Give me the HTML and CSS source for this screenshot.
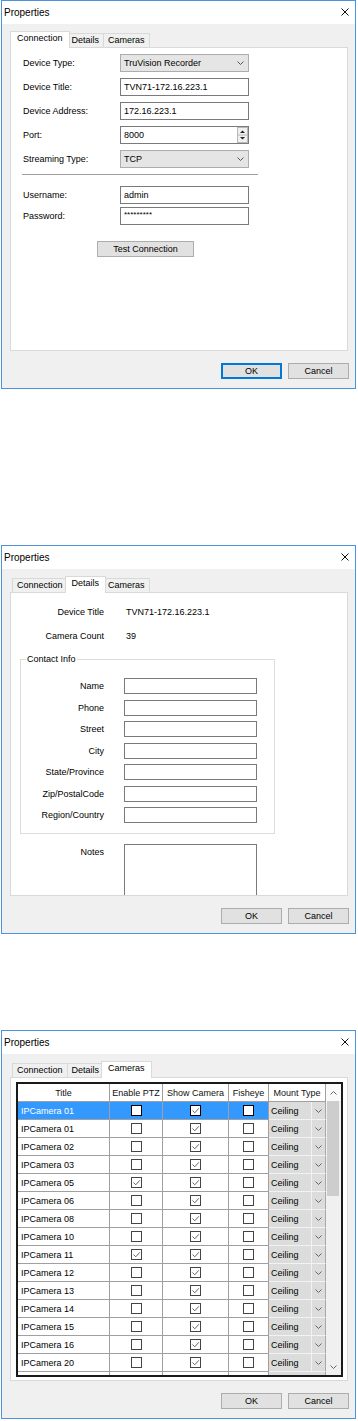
FILE: index.html
```html
<!DOCTYPE html>
<html>
<head>
    <title>Properties</title>
    <link rel="stylesheet" href="styles.css">
</head>
<body>
    <!-- Connection tab -->
    <div class="dialog" id="connection-dialog">
        <div class="title-bar">
            <span class="title-text">Properties</span>
            <svg class="close-icon" width="8" height="8" viewBox="0 0 8 8"><path d="M0.5 0.5L7.5 7.5M7.5 0.5L0.5 7.5" stroke="#111" stroke-width="1" fill="none"/></svg>
        </div>
        <div class="dialog-body">
            <div class="tab-strip">
                <div class="tab active">Connection</div>
                <div class="tab">Details</div>
                <div class="tab">Cameras</div>
            </div>
            <div class="tab-panel connection-panel">
                <div class="form-row">
                    <span class="form-label">Device Type:</span>
                    <div class="combo">
                        <span>TruVision Recorder</span>
                        <svg class="chevron" width="7" height="4" viewBox="0 0 7 4"><path d="M0.5 0.5L3.5 3.5L6.5 0.5" fill="none" stroke="#555"/></svg>
                    </div>
                </div>
                <div class="form-row">
                    <span class="form-label">Device Title:</span>
                    <div class="text-box">TVN71-172.16.223.1</div>
                </div>
                <div class="form-row spaced">
                    <span class="form-label">Device Address:</span>
                    <div class="text-box">172.16.223.1</div>
                </div>
                <div class="form-row">
                    <span class="form-label">Port:</span>
                    <div class="text-box">
                        <span>8000</span>
                        <svg class="spinner" width="11" height="16" viewBox="0 0 11 16">
                            <rect x="0.5" y="0.5" width="10" height="15" fill="#f0f0f0" stroke="#b9b9b9"/>
                            <line x1="0.5" y1="8" x2="10.5" y2="8" stroke="#b9b9b9"/>
                            <path d="M3 6L5.5 3.5L8 6Z" fill="#222"/>
                            <path d="M3 10L5.5 12.5L8 10Z" fill="#222"/>
                        </svg>
                    </div>
                </div>
                <div class="form-row">
                    <span class="form-label">Streaming Type:</span>
                    <div class="combo">
                        <span>TCP</span>
                        <svg class="chevron" width="7" height="4" viewBox="0 0 7 4"><path d="M0.5 0.5L3.5 3.5L6.5 0.5" fill="none" stroke="#555"/></svg>
                    </div>
                </div>
                <div class="separator"></div>
                <div class="form-row tight">
                    <span class="form-label">Username:</span>
                    <div class="text-box">admin</div>
                </div>
                <div class="form-row">
                    <span class="form-label">Password:</span>
                    <div class="text-box password">*********</div>
                </div>
                <button class="btn test-button">Test Connection</button>
            </div>
            <div class="dialog-buttons">
                <button class="btn btn-default">OK</button>
                <button class="btn">Cancel</button>
            </div>
        </div>
    </div>

    <!-- Details tab -->
    <div class="dialog" id="details-dialog">
        <div class="title-bar">
            <span class="title-text">Properties</span>
            <svg class="close-icon" width="8" height="8" viewBox="0 0 8 8"><path d="M0.5 0.5L7.5 7.5M7.5 0.5L0.5 7.5" stroke="#111" stroke-width="1" fill="none"/></svg>
        </div>
        <div class="dialog-body">
            <div class="tab-strip">
                <div class="tab">Connection</div>
                <div class="tab active">Details</div>
                <div class="tab">Cameras</div>
            </div>
            <div class="tab-panel details-panel">
                <div class="info-row">
                    <span class="info-label">Device Title</span>
                    <span class="info-value">TVN71-172.16.223.1</span>
                </div>
                <div class="info-row">
                    <span class="info-label">Camera Count</span>
                    <span class="info-value">39</span>
                </div>
                <div class="group-box">
                    <span class="group-title">Contact Info</span>
                    <div class="group-rows">
                        <div class="group-row"><span class="group-label">Name</span><div class="group-input"></div></div>
                        <div class="group-row"><span class="group-label">Phone</span><div class="group-input"></div></div>
                        <div class="group-row"><span class="group-label">Street</span><div class="group-input"></div></div>
                        <div class="group-row"><span class="group-label">City</span><div class="group-input"></div></div>
                        <div class="group-row"><span class="group-label">State/Province</span><div class="group-input"></div></div>
                        <div class="group-row"><span class="group-label">Zip/PostalCode</span><div class="group-input"></div></div>
                        <div class="group-row"><span class="group-label">Region/Country</span><div class="group-input"></div></div>
                    </div>
                </div>
                <div class="notes-row">
                    <span class="notes-label">Notes</span>
                    <div class="notes-box"></div>
                </div>
            </div>
            <div class="dialog-buttons">
                <button class="btn">OK</button>
                <button class="btn">Cancel</button>
            </div>
        </div>
    </div>

    <!-- Cameras tab -->
    <div class="dialog" id="cameras-dialog">
        <div class="title-bar">
            <span class="title-text">Properties</span>
            <svg class="close-icon" width="8" height="8" viewBox="0 0 8 8"><path d="M0.5 0.5L7.5 7.5M7.5 0.5L0.5 7.5" stroke="#111" stroke-width="1" fill="none"/></svg>
        </div>
        <div class="dialog-body">
            <div class="tab-strip">
                <div class="tab">Connection</div>
                <div class="tab">Details</div>
                <div class="tab active">Cameras</div>
            </div>
            <div class="tab-panel cameras-panel">
                <div class="camera-grid">
                    <div class="grid-table">
                        <div class="cell head">Title</div>
                        <div class="cell head">Enable PTZ</div>
                        <div class="cell head">Show Camera</div>
                        <div class="cell head">Fisheye</div>
                        <div class="cell head mount-head">Mount Type</div>

                        <div class="grid-row selected">
                            <div class="cell name-cell">IPCamera 01</div>
                            <div class="cell"><span class="check"></span></div>
                            <div class="cell"><span class="check"><svg viewBox="0 0 9 9"><path d="M1.5 4.5L3.8 6.8L7.8 2.3"/></svg></span></div>
                            <div class="cell"><span class="check"></span></div>
                            <div class="cell mount-cell"><span class="mount-text">Ceiling</span><span class="mount-arrow"><svg width="7" height="4" viewBox="0 0 7 4"><path d="M0.5 0.5L3.5 3.5L6.5 0.5"/></svg></span></div>
                        </div>
                        <div class="grid-row">
                            <div class="cell name-cell">IPCamera 01</div>
                            <div class="cell"><span class="check"></span></div>
                            <div class="cell"><span class="check"><svg viewBox="0 0 9 9"><path d="M1.5 4.5L3.8 6.8L7.8 2.3"/></svg></span></div>
                            <div class="cell"><span class="check"></span></div>
                            <div class="cell mount-cell"><span class="mount-text">Ceiling</span><span class="mount-arrow"><svg width="7" height="4" viewBox="0 0 7 4"><path d="M0.5 0.5L3.5 3.5L6.5 0.5"/></svg></span></div>
                        </div>
                        <div class="grid-row">
                            <div class="cell name-cell">IPCamera 02</div>
                            <div class="cell"><span class="check"></span></div>
                            <div class="cell"><span class="check"><svg viewBox="0 0 9 9"><path d="M1.5 4.5L3.8 6.8L7.8 2.3"/></svg></span></div>
                            <div class="cell"><span class="check"></span></div>
                            <div class="cell mount-cell"><span class="mount-text">Ceiling</span><span class="mount-arrow"><svg width="7" height="4" viewBox="0 0 7 4"><path d="M0.5 0.5L3.5 3.5L6.5 0.5"/></svg></span></div>
                        </div>
                        <div class="grid-row">
                            <div class="cell name-cell">IPCamera 03</div>
                            <div class="cell"><span class="check"></span></div>
                            <div class="cell"><span class="check"><svg viewBox="0 0 9 9"><path d="M1.5 4.5L3.8 6.8L7.8 2.3"/></svg></span></div>
                            <div class="cell"><span class="check"></span></div>
                            <div class="cell mount-cell"><span class="mount-text">Ceiling</span><span class="mount-arrow"><svg width="7" height="4" viewBox="0 0 7 4"><path d="M0.5 0.5L3.5 3.5L6.5 0.5"/></svg></span></div>
                        </div>
                        <div class="grid-row">
                            <div class="cell name-cell">IPCamera 05</div>
                            <div class="cell"><span class="check"><svg viewBox="0 0 9 9"><path d="M1.5 4.5L3.8 6.8L7.8 2.3"/></svg></span></div>
                            <div class="cell"><span class="check"><svg viewBox="0 0 9 9"><path d="M1.5 4.5L3.8 6.8L7.8 2.3"/></svg></span></div>
                            <div class="cell"><span class="check"></span></div>
                            <div class="cell mount-cell"><span class="mount-text">Ceiling</span><span class="mount-arrow"><svg width="7" height="4" viewBox="0 0 7 4"><path d="M0.5 0.5L3.5 3.5L6.5 0.5"/></svg></span></div>
                        </div>
                        <div class="grid-row">
                            <div class="cell name-cell">IPCamera 06</div>
                            <div class="cell"><span class="check"></span></div>
                            <div class="cell"><span class="check"><svg viewBox="0 0 9 9"><path d="M1.5 4.5L3.8 6.8L7.8 2.3"/></svg></span></div>
                            <div class="cell"><span class="check"></span></div>
                            <div class="cell mount-cell"><span class="mount-text">Ceiling</span><span class="mount-arrow"><svg width="7" height="4" viewBox="0 0 7 4"><path d="M0.5 0.5L3.5 3.5L6.5 0.5"/></svg></span></div>
                        </div>
                        <div class="grid-row">
                            <div class="cell name-cell">IPCamera 08</div>
                            <div class="cell"><span class="check"></span></div>
                            <div class="cell"><span class="check"><svg viewBox="0 0 9 9"><path d="M1.5 4.5L3.8 6.8L7.8 2.3"/></svg></span></div>
                            <div class="cell"><span class="check"></span></div>
                            <div class="cell mount-cell"><span class="mount-text">Ceiling</span><span class="mount-arrow"><svg width="7" height="4" viewBox="0 0 7 4"><path d="M0.5 0.5L3.5 3.5L6.5 0.5"/></svg></span></div>
                        </div>
                        <div class="grid-row">
                            <div class="cell name-cell">IPCamera 10</div>
                            <div class="cell"><span class="check"></span></div>
                            <div class="cell"><span class="check"><svg viewBox="0 0 9 9"><path d="M1.5 4.5L3.8 6.8L7.8 2.3"/></svg></span></div>
                            <div class="cell"><span class="check"></span></div>
                            <div class="cell mount-cell"><span class="mount-text">Ceiling</span><span class="mount-arrow"><svg width="7" height="4" viewBox="0 0 7 4"><path d="M0.5 0.5L3.5 3.5L6.5 0.5"/></svg></span></div>
                        </div>
                        <div class="grid-row">
                            <div class="cell name-cell">IPCamera 11</div>
                            <div class="cell"><span class="check"><svg viewBox="0 0 9 9"><path d="M1.5 4.5L3.8 6.8L7.8 2.3"/></svg></span></div>
                            <div class="cell"><span class="check"><svg viewBox="0 0 9 9"><path d="M1.5 4.5L3.8 6.8L7.8 2.3"/></svg></span></div>
                            <div class="cell"><span class="check"></span></div>
                            <div class="cell mount-cell"><span class="mount-text">Ceiling</span><span class="mount-arrow"><svg width="7" height="4" viewBox="0 0 7 4"><path d="M0.5 0.5L3.5 3.5L6.5 0.5"/></svg></span></div>
                        </div>
                        <div class="grid-row">
                            <div class="cell name-cell">IPCamera 12</div>
                            <div class="cell"><span class="check"></span></div>
                            <div class="cell"><span class="check"><svg viewBox="0 0 9 9"><path d="M1.5 4.5L3.8 6.8L7.8 2.3"/></svg></span></div>
                            <div class="cell"><span class="check"></span></div>
                            <div class="cell mount-cell"><span class="mount-text">Ceiling</span><span class="mount-arrow"><svg width="7" height="4" viewBox="0 0 7 4"><path d="M0.5 0.5L3.5 3.5L6.5 0.5"/></svg></span></div>
                        </div>
                        <div class="grid-row">
                            <div class="cell name-cell">IPCamera 13</div>
                            <div class="cell"><span class="check"></span></div>
                            <div class="cell"><span class="check"><svg viewBox="0 0 9 9"><path d="M1.5 4.5L3.8 6.8L7.8 2.3"/></svg></span></div>
                            <div class="cell"><span class="check"></span></div>
                            <div class="cell mount-cell"><span class="mount-text">Ceiling</span><span class="mount-arrow"><svg width="7" height="4" viewBox="0 0 7 4"><path d="M0.5 0.5L3.5 3.5L6.5 0.5"/></svg></span></div>
                        </div>
                        <div class="grid-row">
                            <div class="cell name-cell">IPCamera 14</div>
                            <div class="cell"><span class="check"></span></div>
                            <div class="cell"><span class="check"><svg viewBox="0 0 9 9"><path d="M1.5 4.5L3.8 6.8L7.8 2.3"/></svg></span></div>
                            <div class="cell"><span class="check"></span></div>
                            <div class="cell mount-cell"><span class="mount-text">Ceiling</span><span class="mount-arrow"><svg width="7" height="4" viewBox="0 0 7 4"><path d="M0.5 0.5L3.5 3.5L6.5 0.5"/></svg></span></div>
                        </div>
                        <div class="grid-row">
                            <div class="cell name-cell">IPCamera 15</div>
                            <div class="cell"><span class="check"></span></div>
                            <div class="cell"><span class="check"><svg viewBox="0 0 9 9"><path d="M1.5 4.5L3.8 6.8L7.8 2.3"/></svg></span></div>
                            <div class="cell"><span class="check"></span></div>
                            <div class="cell mount-cell"><span class="mount-text">Ceiling</span><span class="mount-arrow"><svg width="7" height="4" viewBox="0 0 7 4"><path d="M0.5 0.5L3.5 3.5L6.5 0.5"/></svg></span></div>
                        </div>
                        <div class="grid-row">
                            <div class="cell name-cell">IPCamera 16</div>
                            <div class="cell"><span class="check"></span></div>
                            <div class="cell"><span class="check"><svg viewBox="0 0 9 9"><path d="M1.5 4.5L3.8 6.8L7.8 2.3"/></svg></span></div>
                            <div class="cell"><span class="check"></span></div>
                            <div class="cell mount-cell"><span class="mount-text">Ceiling</span><span class="mount-arrow"><svg width="7" height="4" viewBox="0 0 7 4"><path d="M0.5 0.5L3.5 3.5L6.5 0.5"/></svg></span></div>
                        </div>
                        <div class="grid-row">
                            <div class="cell name-cell">IPCamera 20</div>
                            <div class="cell"><span class="check"></span></div>
                            <div class="cell"><span class="check"><svg viewBox="0 0 9 9"><path d="M1.5 4.5L3.8 6.8L7.8 2.3"/></svg></span></div>
                            <div class="cell"><span class="check"></span></div>
                            <div class="cell mount-cell"><span class="mount-text">Ceiling</span><span class="mount-arrow"><svg width="7" height="4" viewBox="0 0 7 4"><path d="M0.5 0.5L3.5 3.5L6.5 0.5"/></svg></span></div>
                        </div>
                        <div class="grid-row">
                            <div class="cell name-cell"></div>
                            <div class="cell"></div>
                            <div class="cell"></div>
                            <div class="cell"></div>
                            <div class="cell mount-cell"></div>
                        </div>
                    </div>
                    <div class="scrollbar">
                        <div class="scroll-btn scroll-up"><svg width="7" height="4" viewBox="0 0 7 4"><path d="M0.5 3.5L3.5 0.5L6.5 3.5"/></svg></div>
                        <div class="scroll-thumb"></div>
                        <div class="scroll-track"></div>
                        <div class="scroll-btn"><svg width="7" height="4" viewBox="0 0 7 4"><path d="M0.5 0.5L3.5 3.5L6.5 0.5"/></svg></div>
                    </div>
                </div>
            </div>
            <div class="dialog-buttons">
                <button class="btn">OK</button>
                <button class="btn">Cancel</button>
            </div>
        </div>
    </div>
</body>
</html>
```

FILE: styles.css
```css
body {
    margin: 0;
    background-color: #fff;
    font-family: "Liberation Sans", Arial, sans-serif;
    font-size: 9px;
    color: #000;
}

/* window frame */
.dialog {
    box-sizing: border-box;
    width: 355px;
    height: 389px;
    margin-left: 1px;
    border: 1px solid #4b93db;
    background-color: #f0f0f0;
    display: flex;
    flex-direction: column;
}

#details-dialog {
    margin-top: 156px;
}

#cameras-dialog {
    margin-top: 96px;
}

.title-bar {
    flex: none;
    height: 23px;
    background-color: #fff;
    display: flex;
    align-items: center;
    justify-content: space-between;
    padding: 0 6px 1px 2px;
    box-sizing: border-box;
}

.title-text {
    font-size: 10px;
}

.dialog-body {
    flex: 1;
    display: flex;
    flex-direction: column;
    padding: 7px 0 0 8px;
}

/* tabs */
.tab-strip {
    flex: none;
    height: 17px;
    margin-bottom: -1px;
    padding-left: 2px;
    display: flex;
    align-items: flex-end;
    position: relative;
    z-index: 1;
}

.tab {
    box-sizing: border-box;
    height: 14px;
    line-height: 12px;
    padding: 0 4px;
    margin: 0 -1px 1px 0;
    border: 1px solid #d9d9d9;
    border-bottom: none;
    background-color: #f0f0f0;
}

.tab.active {
    height: 17px;
    line-height: 13px;
    padding: 0 6px;
    margin: 0 -3px 0 -2px;
    background-color: #fff;
    position: relative;
    z-index: 2;
}

.tab-panel {
    flex: none;
    box-sizing: border-box;
    width: 338px;
    height: 304px;
    border: 1px solid #d9d9d9;
    background-color: #fff;
    overflow: hidden;
}

.dialog-buttons {
    display: flex;
    justify-content: flex-end;
    gap: 6px;
    margin-top: 12px;
    padding-right: 6px;
}

.btn {
    box-sizing: border-box;
    width: 61px;
    height: 16px;
    padding: 0;
    border: 1px solid #adadad;
    background-color: #e1e1e1;
    font-family: "Liberation Sans", Arial, sans-serif;
    font-size: 9px;
    color: #000;
}

.btn-default {
    border-color: #0078d7;
    box-shadow: inset 0 0 0 1px #0078d7;
}

/* connection */
.connection-panel {
    padding: 6px 0 0 12px;
}

.form-row {
    display: flex;
    align-items: center;
    height: 18px;
    margin-bottom: 6px;
}

.form-row.spaced {
    margin-top: 2px;
}

.form-row.tight {
    margin-bottom: 3px;
}

.form-label {
    width: 97px;
}

.text-box,
.combo {
    box-sizing: border-box;
    width: 129px;
    height: 18px;
    display: flex;
    align-items: center;
    padding: 0 0 0 3px;
    border: 1px solid #7a7a7a;
    background-color: #fff;
}

.combo {
    justify-content: space-between;
    padding-right: 4px;
    border-color: #adadad;
    background-color: #e5e5e5;
}

.spinner {
    margin-left: auto;
}

.password {
    align-items: flex-start;
    padding-top: 3px;
    font-size: 8px;
    line-height: 8px;
}

.separator {
    width: 236px;
    height: 1px;
    margin: 0 0 11px -1px;
    background-color: #a0a0a0;
}

.test-button {
    width: 97px;
    margin: 10px 0 0 74px;
}

/* details */
.details-panel {
    display: flex;
    flex-direction: column;
    align-items: flex-start;
    padding-top: 12px;
}

.details-panel > * {
    flex: none;
}

.info-row {
    display: flex;
    align-items: center;
    height: 14px;
    margin-bottom: 10px;
}

.info-label {
    width: 93px;
    text-align: right;
}

.info-value {
    margin-left: 22px;
}

.group-box {
    box-sizing: border-box;
    width: 255px;
    height: 175px;
    margin: 6px 0 0 9px;
    border: 1px solid #dcdcdc;
    display: flex;
    flex-direction: column;
    align-items: flex-start;
}

.group-title {
    margin: -6px 0 0 5px;
    padding: 0 1px;
    line-height: 11px;
    background-color: #fff;
}

.group-rows {
    display: flex;
    flex-direction: column;
    gap: 5.5px;
    margin-top: 13px;
}

.group-row {
    display: flex;
    align-items: center;
    height: 16px;
}

.group-label {
    width: 83px;
    margin-right: 20px;
    text-align: right;
}

.group-input,
.notes-box {
    box-sizing: border-box;
    width: 133px;
    height: 16px;
    border: 1px solid #7a7a7a;
    background-color: #fff;
}

.notes-row {
    display: flex;
    align-items: flex-start;
    margin-top: 10px;
}

.notes-label {
    width: 93px;
    margin-right: 20px;
    padding-top: 3px;
    text-align: right;
}

.notes-box {
    flex: none;
    height: 70px;
}

/* cameras */
.cameras-panel {
    padding: 4px 0 0 5px;
}

.camera-grid {
    box-sizing: border-box;
    width: 327px;
    height: 295px;
    border: 2px solid #1a1a1a;
    display: flex;
    overflow: hidden;
}

.grid-table {
    width: 308px;
    display: grid;
    grid-template-columns: 92px 53px 66px 40px 57px;
    grid-auto-rows: 18px;
    align-content: start;
}

.grid-row {
    display: contents;
}

.cell {
    box-sizing: border-box;
    display: flex;
    align-items: center;
    justify-content: center;
    border-right: 1px solid #a0a0a0;
    border-bottom: 1px solid #a0a0a0;
    background-color: #fff;
    white-space: nowrap;
}

.cell.head {
    color: #111;
}

.name-cell {
    justify-content: flex-start;
    padding-left: 3px;
}

.grid-row.selected .cell {
    background-color: #3399ff;
}

.grid-row.selected .name-cell {
    color: #fff;
}

.grid-row.selected .check {
    border-color: #000;
}

.check {
    box-sizing: border-box;
    width: 11px;
    height: 11px;
    border: 1px solid #444;
    background-color: #fff;
    display: flex;
}

.check svg {
    width: 9px;
    height: 9px;
    fill: none;
    stroke: #666;
    stroke-width: 1;
}

.mount-cell {
    justify-content: space-between;
    background-color: #dcdcdc;
    border-bottom-color: #f2f2f2;
    border-right-color: #a8a8a8;
}

.grid-row.selected .mount-cell {
    background-color: #dcdcdc;
}

.mount-text {
    padding-left: 2px;
}

.mount-arrow {
    box-sizing: border-box;
    width: 14px;
    height: 100%;
    display: flex;
    align-items: center;
    justify-content: center;
    border-left: 1px solid #f2f2f2;
}

.mount-arrow svg,
.scroll-btn svg {
    fill: none;
    stroke: #666;
    stroke-width: 1;
}

.scrollbar {
    width: 15px;
    display: flex;
    flex-direction: column;
    background-color: #f0f0f0;
}

.scroll-btn {
    flex: none;
    height: 17px;
    display: flex;
    align-items: center;
    justify-content: center;
    background-color: #f0f0f0;
}

.scroll-up {
    background-color: #fafafa;
}

.scroll-thumb {
    flex: none;
    height: 95px;
    margin: 0 2px 0 1px;
    background-color: #cdcdcd;
}

.scroll-track {
    flex: 1;
}
```
